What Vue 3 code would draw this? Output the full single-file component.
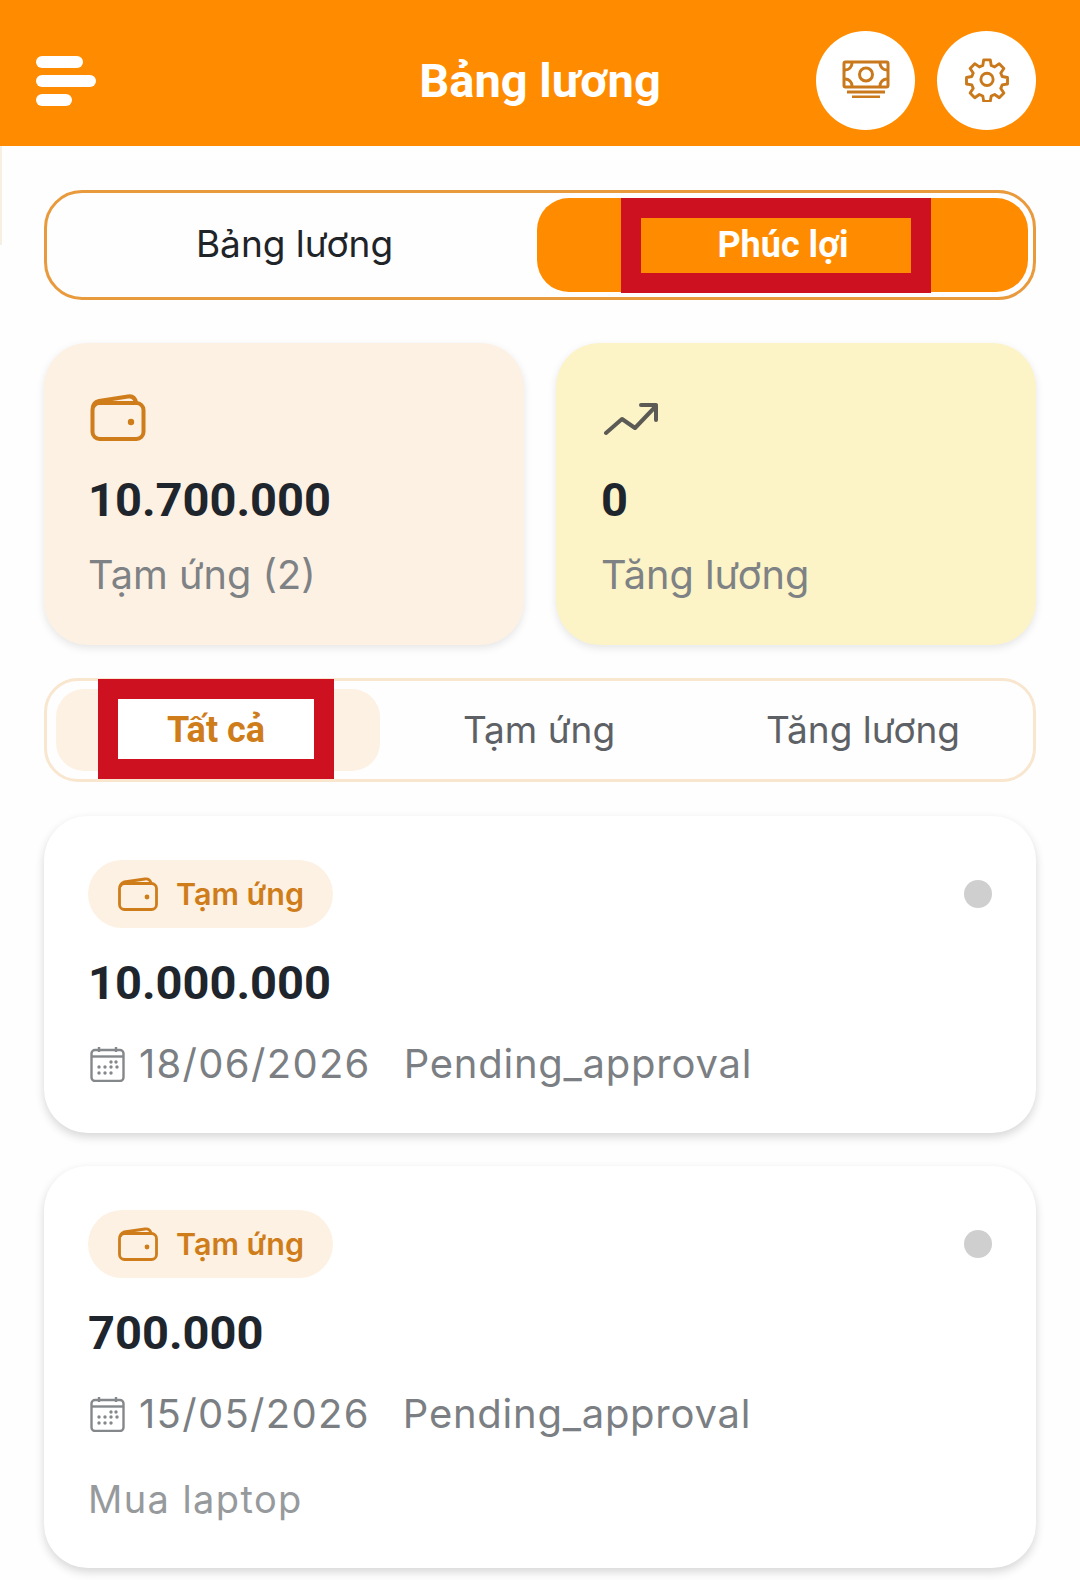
<script setup>
const tabs = ['Tất cả', 'Tạm ứng', 'Tăng lương']
const items = [
  { id: 1, amount: '10.000.000', date: '18/06/2026', status: 'Pending_approval', note: '' },
  { id: 2, amount: '700.000', date: '15/05/2026', status: 'Pending_approval', note: 'Mua laptop' }
]
const calDots = [
  [21, 16], [26, 16],
  [9, 21], [15, 21], [21, 21], [27, 21],
  [9, 27], [15, 27], [21, 27]
]
</script>

<template>
  <div class="page">
    <span class="edge"></span>
    <header class="topbar">
      <button class="menu" aria-label="Menu">
        <span class="bar b1"></span>
        <span class="bar b2"></span>
        <span class="bar b3"></span>
      </button>
      <h1 class="title">Bảng lương</h1>
      <div class="actions">
        <span class="circle">
          <svg width="48" height="38" viewBox="0 0 48 38" fill="none" stroke="#c9791c" stroke-width="3">
            <rect x="2" y="2" width="44" height="25" rx="1.500" />
            <circle cx="24" cy="14.500" r="6.500" />
            <path d="M3 10c4 0 7-3 7-7M45 10c-4 0-7-3-7-7M3 19c4 0 7 3 7 7M45 19c-4 0-7 3-7 7" />
            <path d="M5 32h38M10 37h28" />
          </svg>
        </span>
        <span class="circle">
          <svg width="46" height="46" viewBox="0 0 24 24" fill="none" stroke="#c9791c" stroke-width="1.500" stroke-linejoin="round">
            <path d="M10.300 2h3.400l.5 2.900 1.800.8 2.400-1.700 2.400 2.500-1.600 2.400.7 1.800 2.800.5v3.400l-2.800.5-.7 1.800 1.600 2.400-2.400 2.500-2.400-1.700-1.800.8-.5 2.800h-3.400l-.5-2.800-1.800-.8-2.400 1.700-2.400-2.500 1.600-2.400-.7-1.800-2.800-.5v-3.400l2.800-.5.7-1.800-1.600-2.400 2.400-2.500 2.400 1.700 1.800-.8z" />
            <circle cx="12" cy="12.200" r="3.200" />
          </svg>
        </span>
      </div>
    </header>

    <main class="content">
      <div class="switch">
        <div class="switch-item plain">Bảng lương</div>
        <div class="switch-item on">
          Phúc lợi
          <span class="mark mark-a"></span>
        </div>
      </div>

      <section class="stats">
        <div class="stat peach">
          <svg class="stat-icon" width="56" height="48" viewBox="0 0 56 48" fill="none" stroke="#cf7d1a" stroke-width="4" stroke-linejoin="round">
            <path d="M3 14c0-4 2-6 6-7L38 2.500c4-.6 7 1 8 6" />
            <rect x="2.500" y="9" width="51" height="36" rx="7" />
            <circle cx="41" cy="28" r="3.200" fill="#cf7d1a" stroke="none" />
          </svg>
          <div class="stat-value">10.700.000</div>
          <div class="stat-label">Tạm ứng (2)</div>
        </div>
        <div class="stat yellow">
          <svg class="stat-icon" width="56" height="48" viewBox="0 0 56 48" fill="none" stroke="#5b5a55" stroke-width="4" stroke-linecap="round" stroke-linejoin="round">
            <path d="M4 39 20 25l13 9L54 12" />
            <path d="M39 11h15v15" />
          </svg>
          <div class="stat-value">0</div>
          <div class="stat-label">Tăng lương</div>
        </div>
      </section>

      <nav class="filter">
        <div v-for="(t, i) in tabs" :key="t" class="filter-item" :class="{ on: i === 0 }">
          <span v-if="i === 0" class="mark mark-b"></span>
          <span class="filter-text">{{ t }}</span>
        </div>
      </nav>

      <article v-for="it in items" :key="it.id" class="card" :class="{ tall: it.note }">
        <div class="card-top">
          <span class="tag">
            <svg width="40" height="34" viewBox="0 0 40 34" fill="none" stroke="#cf7d1a" stroke-width="2.800" stroke-linejoin="round">
              <path d="M2 10c0-3 2-4 4-5L27 2c3-.4 5 .8 6 4" />
              <rect x="1.500" y="6.500" width="37" height="26" rx="5" />
              <circle cx="29" cy="20" r="2.400" fill="#cf7d1a" stroke="none" />
            </svg>
            Tạm ứng
          </span>
          <span class="dot"></span>
        </div>
        <div class="amount">{{ it.amount }}</div>
        <div class="meta">
          <svg class="cal" width="35" height="36" viewBox="0 0 35 36" fill="none" stroke="#85888b" stroke-width="2.400">
            <rect x="1.500" y="4" width="32" height="31" rx="3.500" />
            <path d="M2 10.500h31" />
            <path d="M9 1v5M26 1v5" />
            <circle v-for="(d, k) in calDots" :key="k" :cx="d[0]" :cy="d[1]" r="1.700" fill="#85888b" stroke="none" />
          </svg>
          <span class="date">{{ it.date }}</span>
          <span class="status">{{ it.status }}</span>
        </div>
        <div v-if="it.note" class="note">{{ it.note }}</div>
      </article>
    </main>
  </div>
</template>

<style scoped>
.page {
  width: 1080px;
  height: 1580px;
  overflow: hidden;
  background: #fefefe;
  font-family: Inter, "Noto Sans", sans-serif;
  position: relative;
}
.edge {
  position: absolute;
  left: 0;
  top: 146px;
  width: 2px;
  height: 99px;
  background: #f6f0e2;
}
.topbar {
  height: 146px;
  background: #ff8c00;
  display: flex;
  align-items: center;
  justify-content: space-between;
  padding: 15px 44px 0 36px;
  box-sizing: border-box;
  position: relative;
}
.menu {
  display: flex;
  flex-direction: column;
  gap: 7px;
  padding: 0;
  background: none;
  border: 0;
  width: 62px;
}
.bar {
  display: block;
  height: 12px;
  border-radius: 6px;
  background: #fff;
}
.b1 { width: 47px; }
.b2 { width: 60px; }
.b3 { width: 36px; }
.title {
  position: absolute;
  left: 0;
  right: 0;
  top: 50px;
  margin: 0;
  text-align: center;
  color: #fff;
  font: 700 47px/62px Roboto, sans-serif;
}
.actions {
  display: flex;
  gap: 22px;
}
.circle {
  width: 99px;
  height: 99px;
  box-sizing: border-box;
  padding-bottom: 3px;
  border-radius: 50%;
  background: #fff;
  display: flex;
  align-items: center;
  justify-content: center;
}
.content {
  padding: 44px 44px 0;
  display: flex;
  flex-direction: column;
}
.switch {
  height: 110px;
  box-sizing: border-box;
  border: 3px solid #e89a3c;
  border-radius: 38px;
  padding: 5px;
  display: grid;
  grid-template-columns: 1fr 491px;
}
.switch-item {
  display: flex;
  align-items: center;
  justify-content: center;
  font-size: 37px;
  color: #1f2429;
  position: relative;
  border-radius: 32px;
}
.switch-item.plain { padding-bottom: 3px; }
.switch-item.on {
  background: #ff8c00;
  color: #fff;
  font: 700 36px Roboto, sans-serif;
  padding-left: 1px;
}
.mark {
  position: absolute;
  box-sizing: border-box;
  border: 20px solid #cd1120;
  pointer-events: none;
}
.mark-a {
  left: 84px;
  top: 0;
  width: 310px;
  height: 95px;
}
.stats {
  margin-top: 43px;
  display: grid;
  grid-template-columns: 480px 480px;
  gap: 32px;
}
.stat {
  height: 302px;
  box-sizing: border-box;
  border-radius: 44px;
  padding: 51px 45px 0;
  box-shadow: 0 3px 8px rgba(0, 0, 0, 0.1);
}
.peach { background: #fdf1e3; padding-left: 44px; }
.peach .stat-icon { margin-left: 2px; }
.yellow { background: #fcf3c6; }
.stat-icon { display: block; margin-bottom: 27px; margin-left: 1px; }
.stat-value {
  font: 700 47px/62px Roboto, sans-serif;
  color: #1e252c;
}
.stat-label {
  margin-top: 14px;
  font-size: 39.700px;
  line-height: 60px;
  color: #7e8285;
}
.filter {
  margin-top: 33px;
  height: 104px;
  box-sizing: border-box;
  border: 3px solid #f9e6cf;
  border-radius: 34px;
  padding: 8px 9px;
  display: grid;
  grid-template-columns: 324px 1fr 1fr;
}
.filter-item {
  display: flex;
  align-items: center;
  justify-content: center;
  font-size: 37px;
  color: #5d6165;
  position: relative;
  border-radius: 28px;
  padding-bottom: 2px;
}
.filter-item:nth-child(2) { padding-right: 4px; }
.filter-text { position: relative; }
.filter-item.on {
  background: #fdf1e3;
  color: #cf7d1a;
  font: 700 36px Roboto, sans-serif;
  padding-right: 4px;
  padding-bottom: 0;
}
.mark-b {
  left: 42px;
  top: -10px;
  width: 236px;
  height: 100px;
  background: #fff;
}
.card {
  margin-top: 34px;
  height: 317px;
  box-sizing: border-box;
  background: #fff;
  border-radius: 44px;
  padding: 44px 44px 0 44px;
  box-shadow: 0 4px 10px rgba(0, 0, 0, 0.16);
}
.card.tall { height: 402px; margin-top: 33px; }
.card-top {
  display: flex;
  align-items: center;
  justify-content: space-between;
}
.tag {
  display: inline-flex;
  align-items: center;
  gap: 18px;
  height: 68px;
  box-sizing: border-box;
  padding: 0 29px 2px 30px;
  border-radius: 34px;
  background: #fdf1e3;
  color: #cf7d1a;
  font-size: 30.500px;
  font-weight: 600;
}
.tag svg { margin-top: 2px; }
.dot {
  width: 28px;
  height: 28px;
  border-radius: 50%;
  background: #cfcfcf;
}
.amount {
  margin-top: 24px;
  font: 700 47px/62px Roboto, sans-serif;
  color: #1e252c;
}
.meta {
  margin-top: 18px;
  display: flex;
  align-items: center;
  font-size: 40px;
  line-height: 64px;
  color: #7b7f83;
}
.cal { margin-left: 2px; }
.date { margin-left: 14px; letter-spacing: 1.300px; }
.status { margin-left: 33px; letter-spacing: 0.750px; }
.note {
  margin-top: 23px;
  font-size: 38px;
  line-height: 60px;
  letter-spacing: 1.400px;
  color: #979a9c;
}
</style>

<style>
html, body { margin: 0; background: #fefefe; }
</style>
